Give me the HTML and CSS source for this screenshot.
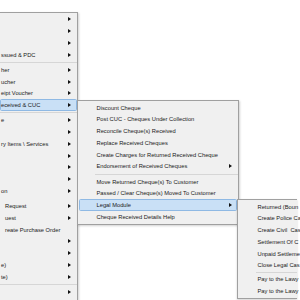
FILE: index.html
```html
<!DOCTYPE html>
<html>
<head>
<meta charset="utf-8">
<link rel="stylesheet" href="styles.css">
</head>
<body>
<div class="menu menu-main">
  <div class="item has-sub"><span class="label"></span><span class="arrow"></span></div>
  <div class="item has-sub"><span class="label"></span><span class="arrow"></span></div>
  <div class="item has-sub"><span class="label"></span><span class="arrow"></span></div>
  <div class="item has-sub"><span class="label">ssued &amp; PDC</span><span class="arrow"></span></div>
  <div class="sep"></div>
  <div class="item has-sub"><span class="label">her</span><span class="arrow"></span></div>
  <div class="item has-sub"><span class="label">ucher</span><span class="arrow"></span></div>
  <div class="item has-sub"><span class="label">eipt Voucher</span><span class="arrow"></span></div>
  <div class="item has-sub active"><span class="label">eceived &amp; CUC</span><span class="arrow"></span>
    <div class="menu menu-sub">
      <div class="item"><span class="label">Discount Cheque</span></div>
      <div class="item"><span class="label">Post CUC - Cheques Under Collection</span></div>
      <div class="item"><span class="label">Reconcile Cheque(s) Received</span></div>
      <div class="item"><span class="label">Replace Received Cheques</span></div>
      <div class="item"><span class="label">Create Charges for Returned Received Cheque</span></div>
      <div class="item has-sub"><span class="label">Endorsement of Received Cheques</span><span class="arrow"></span></div>
      <div class="sep"></div>
      <div class="item"><span class="label">Move Returned Cheque(s) To Customer</span></div>
      <div class="item"><span class="label">Passed / Clear Cheque(s) Moved To Customer</span></div>
      <div class="item has-sub active"><span class="label">Legal Module</span><span class="arrow"></span>
        <div class="menu menu-sub menu-legal">
          <div class="item"><span class="label">Returned (Boun</span></div>
          <div class="item"><span class="label">Create Police Ca</span></div>
          <div class="item"><span class="label">Create Civil&nbsp; Cas</span></div>
          <div class="item"><span class="label">Settlement Of C</span></div>
          <div class="item"><span class="label">Unpaid Settleme</span></div>
          <div class="item"><span class="label">Close Legal Cas</span></div>
          <div class="sep thin"></div>
          <div class="item"><span class="label">Pay to the Lawy</span></div>
          <div class="item"><span class="label">Pay to the Lawy</span></div>
        </div>
      </div>
      <div class="item"><span class="label">Cheque Received Details Help</span></div>
    </div>
  </div>
  <div class="sep"></div>
  <div class="item has-sub"><span class="label">e</span><span class="arrow"></span></div>
  <div class="item has-sub"><span class="label"></span><span class="arrow"></span></div>
  <div class="item has-sub"><span class="label">ry Items \ Services</span><span class="arrow"></span></div>
  <div class="item has-sub"><span class="label"></span><span class="arrow"></span></div>
  <div class="item has-sub"><span class="label"></span><span class="arrow"></span></div>
  <div class="item has-sub"><span class="label"></span><span class="arrow"></span></div>
  <div class="item has-sub"><span class="label">on</span><span class="arrow"></span></div>
  <div class="sep blank"></div>
  <div class="item has-sub"><span class="label indent">Request</span><span class="arrow"></span></div>
  <div class="item has-sub"><span class="label indent">uest</span><span class="arrow"></span></div>
  <div class="item"><span class="label indent">reate Purchase Order</span></div>
  <div class="item has-sub"><span class="label"></span><span class="arrow"></span></div>
  <div class="item has-sub"><span class="label"></span><span class="arrow"></span></div>
  <div class="item has-sub"><span class="label">e)</span><span class="arrow"></span></div>
  <div class="item has-sub"><span class="label">te)</span><span class="arrow"></span></div>
  <div class="sep"></div>
  <div class="item has-sub"><span class="label"></span><span class="arrow"></span></div>
</div>
</body>
</html>
```

FILE: styles.css
```css
html, body {
  margin: 0;
  padding: 0;
  background: #ffffff;
  overflow: hidden;
  width: 300px;
  height: 300px;
}

body {
  font-family: "Liberation Sans", Arial, sans-serif;
  font-size: 5.75px;
  color: #1a1a1a;
}

.menu {
  box-sizing: border-box;
  background: #f0f0f0;
  border: 1px solid #a0a0a0;
  padding: 0.5px 0;
  box-shadow: 1px 1px 2px rgba(0, 0, 0, 0.18);
}

.menu-main {
  width: 78px;
  height: 288px;
  margin-top: 12px;
  border-left: none;
  border-bottom: none;
}

.item {
  position: relative;
  box-sizing: border-box;
  height: 11.75px;
  margin: 0 0.5px 0 0;
  border: 1px solid transparent;
  border-radius: 1.5px;
  display: flex;
  align-items: center;
  white-space: nowrap;
}

.item.active {
  background: #c9e0f6;
  border-color: #8fb9e4;
}

.label {
  flex: 1;
  padding-left: 0;
}

.label.indent {
  padding-left: 4px;
}

.arrow {
  width: 0;
  height: 0;
  border-left: 3px solid #111111;
  border-top: 2px solid transparent;
  border-bottom: 2px solid transparent;
  margin-right: 4.5px;
}

.sep {
  height: 3.5px;
  display: flex;
  align-items: center;
}

.sep::before {
  content: "";
  flex: 1;
  height: 0;
  border-top: 1px solid #d6d6d6;
}

.sep.blank::before {
  border-top-color: transparent;
}

.menu-sub {
  position: absolute;
  left: calc(100% + 1.5px);
  top: -0.5px;
  width: 162px;
  padding: 1px 0;
}

.menu-sub .item {
  margin: 0 1px;
}

.menu-sub .label {
  padding-left: 16.5px;
}

.menu-sub .sep {
  padding-left: 16.5px;
}

.menu-legal {
  top: -1.5px;
  left: calc(100% + 1px);
  width: 60px;
  border-right: none;
  box-shadow: 0 1px 2px rgba(0, 0, 0, 0.18);
}

.menu-legal .item {
  margin-right: 0;
}

.menu-legal .label {
  padding-left: 17.5px;
}

.menu-legal .sep.thin {
  height: 2px;
  padding-left: 17.5px;
}
```
